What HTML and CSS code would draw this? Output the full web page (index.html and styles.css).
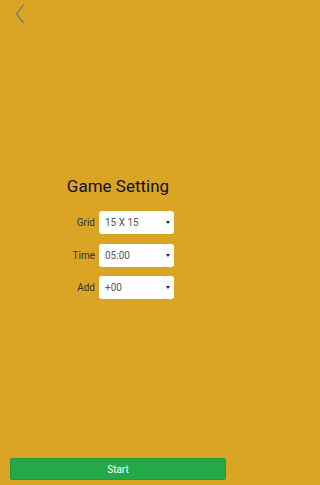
FILE: index.html
```html
<!DOCTYPE html>
<html>
<head>
<meta charset="utf-8">
<meta name="viewport" content="width=236">
<link rel="stylesheet" href="styles.css">
</head>
<body>
<div class="app">
  <header class="top">
    <button class="back" aria-label="Back">
      <svg width="12" height="22" viewBox="0 0 12 22"><polyline points="8.5,1 1.5,10 8.5,19" fill="none" stroke="#7c7c7c" stroke-width="1.4"/></svg>
    </button>
  </header>
  <main class="settings">
    <h1 class="title">Game Setting</h1>
    <div class="form">
      <label class="lbl">Grid</label>
      <div class="sel"><span>15 X 15</span></div>
      <label class="lbl">Time</label>
      <div class="sel"><span>05:00</span></div>
      <label class="lbl">Add</label>
      <div class="sel"><span>+00</span></div>
    </div>
  </main>
  <footer class="foot">
    <button class="start">Start</button>
  </footer>
</div>
</body>
</html>
```

FILE: styles.css
```css
html, body {
  margin: 0;
  padding: 0;
}
body {
  background: #daa425;
  font-family: Roboto, "Liberation Sans", sans-serif;
}
.app {
  width: 236px;
  height: 485px;
  display: flex;
  flex-direction: column;
}
.top {
  height: 30px;
  padding: 4px 0 0 15px;
  box-sizing: border-box;
}
.back {
  background: none;
  border: 0;
  padding: 0;
  display: block;
}
.back svg { display: block; }
.settings {
  flex: 1;
  padding-top: 146px;
  display: flex;
  flex-direction: column;
  align-items: center;
}
.title {
  margin: 0;
  font-size: 17px;
  line-height: 20px;
  font-weight: 400;
  color: #111;
}
.form {
  margin-top: 15px;
  display: grid;
  grid-template-columns: 33px 75px;
  column-gap: 4px;
  row-gap: 9.5px;
  align-items: center;
}
.lbl {
  text-align: right;
  font-size: 10px;
  color: #333;
}
.sel {
  position: relative;
  height: 23px;
  background: #fff;
  border-radius: 3px;
  display: flex;
  align-items: center;
  padding-left: 6px;
  font-size: 10px;
  color: #555;
}
.sel::after {
  content: "";
  position: absolute;
  right: 4px;
  top: 10px;
  border-left: 2px solid transparent;
  border-right: 2px solid transparent;
  border-top: 3px solid #222;
}
.foot {
  padding: 0 10px 5px;
}
.start {
  display: block;
  width: 100%;
  height: 22px;
  background: #24a849;
  border: 1px solid #1f9a3f;
  border-radius: 2px;
  color: #fff;
  font-family: Roboto, "Liberation Sans", sans-serif;
  font-size: 10px;
  padding: 0;
}
```
